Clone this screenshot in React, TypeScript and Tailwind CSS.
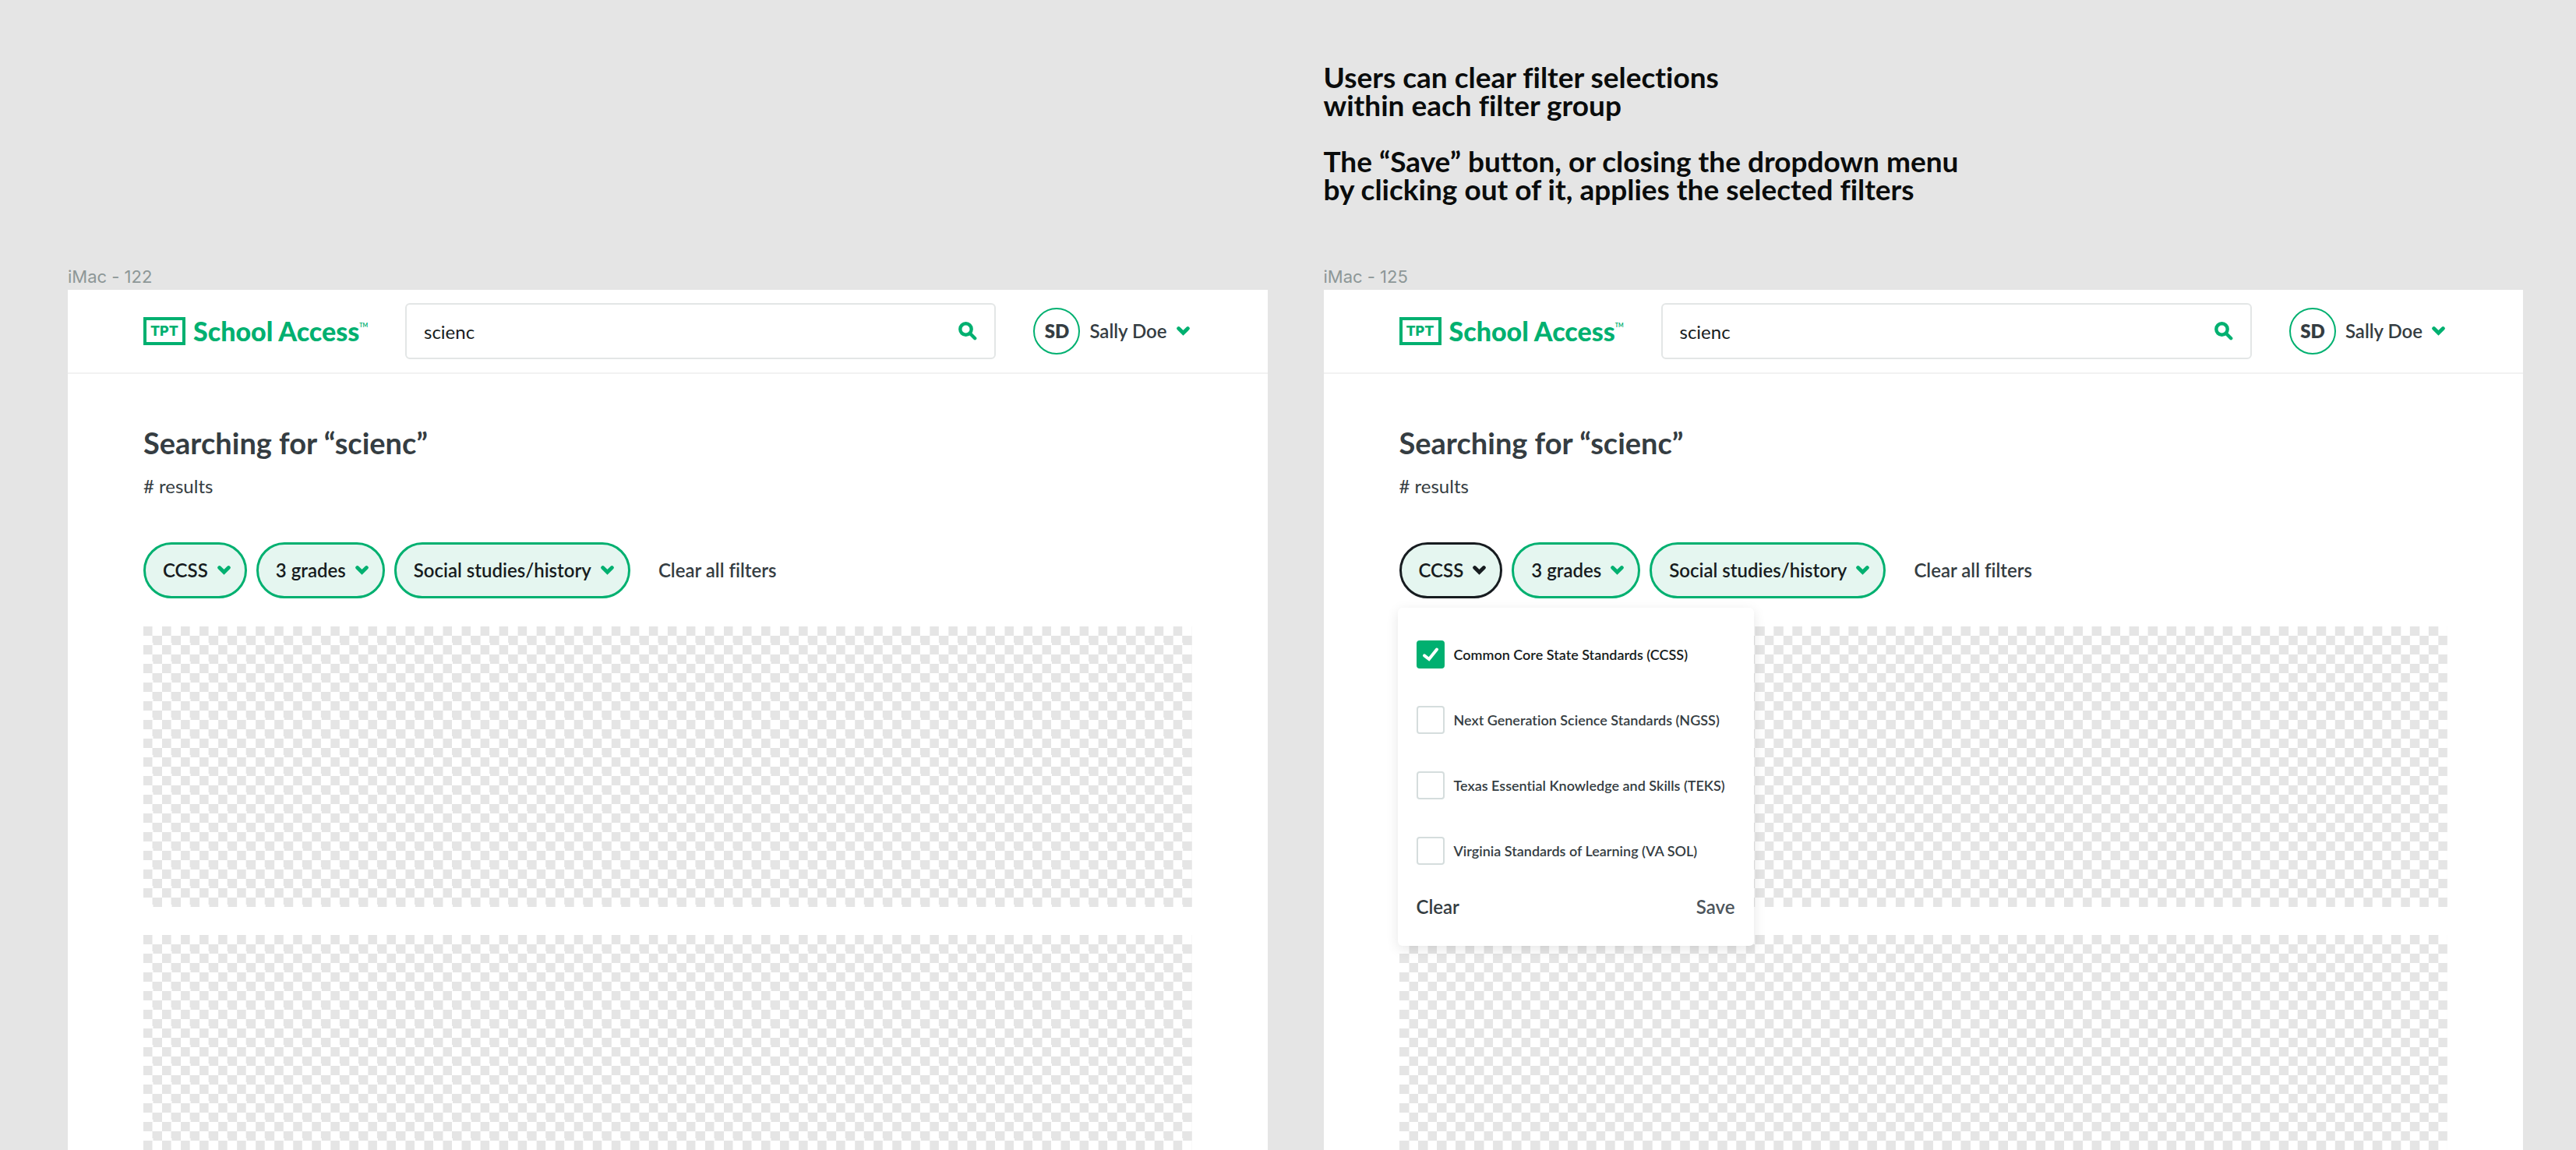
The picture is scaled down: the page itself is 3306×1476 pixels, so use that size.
import React, { useState } from "react";

function Chevron({ className = "" }: { className?: string }) {
  return (
    <svg viewBox="0 0 17 12" className={`h-3 w-[17px] shrink-0 ${className}`} fill="none" stroke="currentColor" strokeWidth="4.8" strokeLinecap="round" aria-hidden="true">
      <path d="M2.6 2.6 8.5 8.3 14.4 2.6" />
    </svg>
  );
}

function SearchIcon() {
  return (
    <svg viewBox="0 0 24 24" className="size-6" fill="none" stroke="currentColor" strokeWidth="4.4" strokeLinecap="round" aria-hidden="true">
      <circle cx="9.5" cy="9.5" r="7.2" />
      <path d="M15.5 15.5 21.2 21.2" />
    </svg>
  );
}

function Logo() {
  return (
    <a href="#home" aria-label="TPT School Access" className="flex w-72 shrink-0 items-center gap-2.5 whitespace-nowrap text-[#00b070]">
      <span className="flex h-9 w-[54px] shrink-0 items-center justify-center border-4 border-[#00b070] font-[Inter,sans-serif] text-lg/none font-extrabold">TPT</span>
      <span className="flex items-start text-[34px]/10 font-black">
        School Access
        <span className="pt-2 text-[7px]/2 font-bold">TM</span>
      </span>
    </a>
  );
}

function Header({ id }: { id: string }) {
  const [query, setQuery] = useState("scienc");
  return (
    <header className="flex items-center gap-12 border-b-2 border-[#f2f2f2] px-[97px] py-[17px]">
      <Logo />
      <div className="flex h-[72px] min-w-0 flex-1 items-center rounded-md border-2 border-[#e3e6e6] px-[22px]">
        <input id={`${id}-search`} aria-label="Search" value={query} onChange={(e) => setQuery(e.target.value)} className="h-16 min-w-0 flex-1 bg-transparent text-2xl text-[#171c20] outline-none" />
        <button aria-label="Submit search" className="text-[#00b070]">
          <SearchIcon />
        </button>
      </div>
      <button className="flex shrink-0 items-center gap-3 pr-[3px] text-2xl font-semibold whitespace-nowrap text-[#353d42]">
        <span className="flex size-[60px] items-center justify-center rounded-full border-2 border-[#00b070] font-extrabold">SD</span>
        Sally Doe
        <Chevron className="text-[#00b070]" />
      </button>
    </header>
  );
}

function FilterPill({ label, open = false }: { label: string; open?: boolean }) {
  return (
    <button
      aria-expanded={open}
      className={`flex h-[72px] items-center gap-3 rounded-full border-3 bg-[#e5f6f0] pr-[18px] pl-[22px] text-2xl font-semibold whitespace-nowrap text-[#171c20] ${open ? "border-[#171c20]" : "border-[#00b070]"}`}
    >
      {label}
      <Chevron className={open ? "text-[#171c20]" : "text-[#00b070]"} />
    </button>
  );
}

const STANDARDS = [
  "Common Core State Standards (CCSS)",
  "Next Generation Science Standards (NGSS)",
  "Texas Essential Knowledge and Skills (TEKS)",
  "Virginia Standards of Learning (VA SOL)",
];

function StandardsMenu() {
  const [selected, setSelected] = useState<string[]>([STANDARDS[0]]);
  const toggle = (name: string) =>
    setSelected(selected.includes(name) ? selected.filter((s) => s !== name) : [...selected, name]);
  return (
    <div className="absolute top-full -left-0.5 z-10 mt-3 w-[457px] rounded-md bg-white px-6 pt-[42px] pb-8 shadow-[0_4px_16px_rgba(0,0,0,0.1)]">
      <div className="flex flex-col gap-12">
        {STANDARDS.map((name) => {
          const on = selected.includes(name);
          return (
            <label key={name} className={`flex items-center gap-3 text-lg/8 font-semibold whitespace-nowrap ${on ? "text-[#171c20]" : "text-[#353d42]"}`}>
              <span className="grid size-9 shrink-0">
                <input type="checkbox" checked={on} onChange={() => toggle(name)} className="col-start-1 row-start-1 size-9 appearance-none rounded-sm border-2 border-[#d5dddd] bg-white checked:border-[#00b070] checked:bg-[#00b070]" />
                {on && (
                  <svg viewBox="0 0 36 36" className="pointer-events-none col-start-1 row-start-1 size-9" fill="none" stroke="white" strokeWidth="4" strokeLinecap="round" aria-hidden="true">
                    <path d="M10 19.4 16 24 26 11.5" />
                  </svg>
                )}
              </span>
              {name}
            </label>
          );
        })}
      </div>
      <div className="mt-9 flex justify-between text-2xl/9 font-semibold">
        <button className="text-[#353d42]" onClick={() => setSelected([])}>Clear</button>
        <button className="text-[#4d555c]">Save</button>
      </div>
    </div>
  );
}

function Checker({ className }: { className: string }) {
  return <div className={`bg-[conic-gradient(#fff_25%,#e5e5e5_0_50%,#fff_0_75%,#e5e5e5_0)] bg-size-[24px_24px] [background-repeat:round_repeat] ${className}`} />;
}

function Frame({ name, id, menuOpen = false }: { name: string; id: string; menuOpen?: boolean }) {
  return (
    <section className="flex min-w-0 flex-col" aria-label={name}>
      <p className="pb-[3px] font-[Inter,sans-serif] text-[22px]/7 text-[#8d9797]">{name}</p>
      <div className="flex flex-1 flex-col bg-white">
        <Header id={id} />
        <main className="flex flex-1 flex-col px-[97px] pt-16">
          <h1 className="text-[38px]/[48px] font-bold text-[#353d42]">Searching for “scienc”</h1>
          <p className="mt-4 text-2xl/8 text-[#353d42]"># results</p>
          <div className="mt-14 flex items-center gap-3">
            <div className="relative">
              <FilterPill label="CCSS" open={menuOpen} />
              {menuOpen && <StandardsMenu />}
            </div>
            <FilterPill label="3 grades" />
            <FilterPill label="Social studies/history" />
            <button className="ml-6 text-2xl font-semibold whitespace-nowrap text-[#353d42]">Clear all filters</button>
          </div>
          <Checker className="mt-9 h-[360px]" />
          <Checker className="mt-9 min-h-60 flex-1" />
        </main>
      </div>
    </section>
  );
}

export default function App() {
  return (
    <div className="grid min-h-screen grid-cols-2 grid-rows-[auto_1fr] gap-x-[72px] bg-[#e5e5e5] pt-[81px] pr-[68px] pl-[87px] font-[Lato,sans-serif] [font-variant-ligatures:none]">
      <div className="col-start-2 pb-20 text-[37px]/9 font-bold text-[#0a0c0c]">
        <p>
          Users can clear filter selections
          <br />
          within each filter group
        </p>
        <p className="mt-9">
          The “Save” button, or closing the dropdown menu
          <br />
          by clicking out of it, applies the selected filters
        </p>
      </div>
      <div className="col-start-1 row-start-2 grid min-w-0">
        <Frame name="iMac - 122" id="closed" />
      </div>
      <div className="col-start-2 row-start-2 grid min-w-0">
        <Frame name="iMac - 125" id="open" menuOpen />
      </div>
    </div>
  );
}
